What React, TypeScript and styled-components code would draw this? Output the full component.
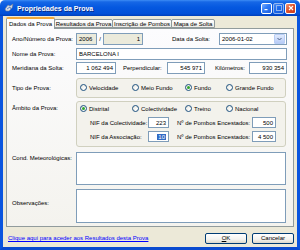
import React from "react";
import styled, { createGlobalStyle } from "styled-components";

const GlobalStyle = createGlobalStyle`
  html, body {
    margin: 0;
    padding: 0;
    width: 300px;
    height: 250px;
    overflow: hidden;
  }
  body {
    font-family: "Liberation Sans", Arial, sans-serif;
    font-size: 6px;
    color: #000;
  }
`;

const Window = styled.div`
  width: 300px;
  height: 250px;
  display: flex;
  flex-direction: column;
`;

const TitleBar = styled.div`
  height: 16px;
  flex: none;
  display: flex;
  align-items: center;
  padding: 0 4px 0 4px;
  border-radius: 5px 5px 0 0;
  background: linear-gradient(
    to bottom,
    #3d8cf5 0%,
    #1667e6 12%,
    #0558e0 45%,
    #0250d8 85%,
    #003fb8 100%
  );
`;

const TitleIcon = styled.svg`
  width: 10px;
  height: 10px;
  flex: none;
`;

const TitleText = styled.div`
  margin-left: 3px;
  flex: 1;
  color: #fff;
  font-weight: bold;
  font-size: 7px;
  text-shadow: 1px 1px 0 #0a2a86;
`;

const CaptionButton = styled.div<{ $kind: "min" | "max" | "close" }>`
  width: 11px;
  height: 11px;
  margin-left: 1px;
  box-sizing: border-box;
  border: 1px solid #fff;
  border-radius: 2px;
  display: flex;
  align-items: center;
  justify-content: center;
  opacity: ${({ $kind }) => ($kind === "max" ? 0.55 : 1)};
  background: ${({ $kind }) =>
    $kind === "close"
      ? "linear-gradient(135deg, #f09a7c 0%, #e0552e 45%, #c8391a 100%)"
      : "linear-gradient(135deg, #7fb0ff 0%, #2f7af5 45%, #1f5ee0 100%)"};
`;

const Frame = styled.div`
  flex: 1;
  display: flex;
  flex-direction: column;
  background: #ece9d8;
  border-left: 3px solid #0a55df;
  border-right: 3px solid #0a55df;
  border-bottom: 3px solid #0a4bd0;
  padding: 1px 3px 0 3px;
`;

const TabStrip = styled.div`
  height: 11px;
  display: flex;
  align-items: flex-end;
  flex: none;
  position: relative;
  z-index: 1;
`;

const Tab = styled.div<{ $active?: boolean; $w: number }>`
  width: ${({ $w }) => $w}px;
  box-sizing: border-box;
  height: ${({ $active }) => ($active ? 12 : 9)}px;
  margin-bottom: ${({ $active }) => ($active ? -1 : 0)}px;
  display: flex;
  align-items: center;
  justify-content: center;
  white-space: nowrap;
  border: 1px solid #919b9c;
  border-bottom: ${({ $active }) => ($active ? "none" : "1px solid #919b9c")};
  border-top: ${({ $active }) => ($active ? "2px solid #f3a93a" : "1px solid #919b9c")};
  border-radius: 2px 2px 0 0;
  background: ${({ $active }) =>
    $active ? "#fcfcfe" : "linear-gradient(to bottom, #ffffff, #ecebe6)"};
  margin-left: ${({ $active }) => ($active ? 0 : -1)}px;
`;

const Panel = styled.div`
  height: 199px;
  box-sizing: border-box;
  flex: none;
  border: 1px solid #919b9c;
  background: linear-gradient(to bottom, #fcfcfe 0%, #f4f3ee 100%);
  padding: 4px 6px 0 5px;
  display: flex;
  flex-direction: column;
`;

const Row = styled.div<{ $mt?: number; $h?: number; $top?: boolean }>`
  display: flex;
  align-items: ${({ $top }) => ($top ? "flex-start" : "center")};
  margin-top: ${({ $mt }) => $mt ?? 0}px;
  height: ${({ $h }) => $h ?? 12}px;
  flex: none;
`;

const Label = styled.div<{ $pt?: number }>`
  width: 64px;
  flex: none;
  white-space: nowrap;
  padding-top: ${({ $pt }) => $pt ?? 0}px;
`;

const InlineLabel = styled.div<{ $w?: number; $pl?: number; $right?: boolean }>`
  width: ${({ $w }) => ($w ? `${$w}px` : "auto")};
  flex: ${({ $w }) => ($w ? "none" : 1)};
  padding-left: ${({ $pl }) => $pl ?? 0}px;
  padding-right: ${({ $right }) => ($right ? 9 : 0)}px;
  text-align: ${({ $right }) => ($right ? "right" : "left")};
  box-sizing: border-box;
  white-space: nowrap;
`;

const Field = styled.div<{ $w?: number; $h?: number; $right?: boolean; $disabled?: boolean }>`
  width: ${({ $w }) => ($w ? `${$w}px` : "100%")};
  height: ${({ $h }) => $h ?? 12}px;
  flex: none;
  box-sizing: border-box;
  border: 1px solid #7f9db9;
  background: ${({ $disabled }) => ($disabled ? "#ebeadb" : "#fff")};
  display: flex;
  align-items: center;
  justify-content: ${({ $right }) => ($right ? "flex-end" : "flex-start")};
  padding: 0 2px;
  white-space: nowrap;
`;

const Selected = styled.span`
  background: #316ac5;
  color: #fff;
  padding: 0 1px;
`;

const Slash = styled.div`
  width: 6px;
  text-align: center;
  flex: none;
`;

const Combo = styled(Field)`
  justify-content: space-between;
  padding-right: 1px;
`;

const ComboButton = styled.div`
  width: 9px;
  height: 8px;
  border-radius: 1px;
  border: 1px solid #b9cdf5;
  background: linear-gradient(to bottom, #e2ebfd, #b7cbf6);
  display: flex;
  align-items: center;
  justify-content: center;
`;

const Group = styled.div<{ $h: number }>`
  width: 210px;
  height: ${({ $h }) => $h}px;
  box-sizing: border-box;
  border: 1px solid #d0d0bf;
  border-radius: 3px;
  background: #f3f2ec;
  display: flex;
  flex-direction: column;
  flex: none;
`;

const RadioRow = styled.div<{ $mt: number }>`
  display: grid;
  grid-template-columns: 52px 53px 41px auto;
  padding-left: 3px;
  margin-top: ${({ $mt }) => $mt}px;
  height: 9px;
  align-items: center;
`;

const RadioItem = styled.div`
  display: flex;
  align-items: center;
  white-space: nowrap;
`;

const RadioCircle = styled.div<{ $on?: boolean }>`
  width: 7px;
  height: 7px;
  box-sizing: border-box;
  border-radius: 50%;
  border: 1px solid #1c5180;
  background: radial-gradient(circle at 70% 70%, #ffffff 0%, #e6e5dc 100%);
  margin-right: 2px;
  display: flex;
  align-items: center;
  justify-content: center;
  &::after {
    content: "";
    display: ${({ $on }) => ($on ? "block" : "none")};
    width: 3px;
    height: 3px;
    border-radius: 50%;
    background: #2fa52f;
  }
`;

const NifRow = styled.div<{ $mt: number }>`
  display: flex;
  align-items: center;
  height: 11px;
  margin-top: ${({ $mt }) => $mt}px;
  padding-left: 13px;
`;

const TextArea = styled.div<{ $h: number }>`
  width: 210px;
  height: ${({ $h }) => $h}px;
  box-sizing: border-box;
  border: 1px solid #7f9db9;
  background: #fff;
  flex: none;
`;

const Footer = styled.div`
  height: 20px;
  display: flex;
  align-items: center;
  padding: 2px 0 0 2px;
  box-sizing: border-box;
`;

const Link = styled.a`
  flex: 1;
  color: #0000ff;
  text-decoration: underline;
  white-space: nowrap;
`;

const Button = styled.div`
  width: 42px;
  height: 11px;
  box-sizing: border-box;
  margin-left: 5px;
  border: 1px solid #003c74;
  border-radius: 2px;
  background: linear-gradient(to bottom, #ffffff 0%, #f3f2ee 60%, #dcd8cc 100%);
  display: flex;
  align-items: center;
  justify-content: center;
  u {
    text-decoration: underline;
  }
`;

const Radio = ({ label, on }: { label: string; on?: boolean }) => (
  <RadioItem>
    <RadioCircle $on={on} />
    {label}
  </RadioItem>
);

const App = () => {
  return (
    <>
      <GlobalStyle />
      <Window>
        <TitleBar>
          <TitleIcon viewBox="0 0 10 10">
            <path d="M1 6 L4 2 L6 3 L9 1 L8 5 L5 8 L2 8 Z" fill="#d8dde6" stroke="#6c7a90" strokeWidth="0.6" />
            <path d="M3 6 L6 4 L7 6" fill="none" stroke="#2b5fb8" strokeWidth="0.7" />
          </TitleIcon>
          <TitleText>Propriedades da Prova</TitleText>
          <CaptionButton $kind="min">
            <svg width="5" height="5" viewBox="0 0 5 5">
              <rect x="0.5" y="3" width="3" height="1.2" fill="#fff" />
            </svg>
          </CaptionButton>
          <CaptionButton $kind="max">
            <svg width="6" height="6" viewBox="0 0 6 6">
              <rect x="0.5" y="0.5" width="5" height="5" fill="none" stroke="#fff" strokeWidth="1" />
            </svg>
          </CaptionButton>
          <CaptionButton $kind="close">
            <svg width="6" height="6" viewBox="0 0 6 6">
              <path d="M1 1 L5 5 M5 1 L1 5" stroke="#fff" strokeWidth="1.2" />
            </svg>
          </CaptionButton>
        </TitleBar>
        <Frame>
          <TabStrip>
            <Tab $active $w={49}>Dados da Prova</Tab>
            <Tab $w={59}>Resultados da Prova</Tab>
            <Tab $w={60}>Inscrição de Pombos</Tab>
            <Tab $w={44}>Mapa de Solta</Tab>
          </TabStrip>
          <Panel>
            <Row>
              <Label>Ano/Número da Prova:</Label>
              <Field $w={21} $disabled>2006</Field>
              <Slash>/</Slash>
              <Field $w={40} $right $disabled>1</Field>
              <InlineLabel $right>Data da Solta:</InlineLabel>
              <Combo $w={68}>
                2006-01-02
                <ComboButton>
                  <svg width="5" height="4" viewBox="0 0 5 4">
                    <path d="M0.5 1 L2.5 3 L4.5 1" fill="none" stroke="#4d6185" strokeWidth="1" />
                  </svg>
                </ComboButton>
              </Combo>
            </Row>
            <Row $mt={3}>
              <Label>Nome da Prova:</Label>
              <Field $w={211}>BARCELONA I</Field>
            </Row>
            <Row $mt={2}>
              <Label>Meridiana da Solta:</Label>
              <Field $w={40} $right>1 062 494</Field>
              <InlineLabel $w={51} $pl={7}>Perpendicular:</InlineLabel>
              <Field $w={38} $right>545 971</Field>
              <InlineLabel $w={44} $pl={10}>Kilómetros:</InlineLabel>
              <Field $w={38} $right>930 354</Field>
            </Row>
            <Row $mt={4} $h={20}>
              <Label>Tipo de Prova:</Label>
              <Group $h={20}>
                <RadioRow $mt={4}>
                  <Radio label="Velocidade" />
                  <Radio label="Meio Fundo" />
                  <Radio label="Fundo" on />
                  <Radio label="Grande Fundo" />
                </RadioRow>
              </Group>
            </Row>
            <Row $mt={3} $h={46} $top>
              <Label $pt={4}>Âmbito da Prova:</Label>
              <Group $h={46}>
                <RadioRow $mt={2}>
                  <Radio label="Distrital" on />
                  <Radio label="Colectividade" />
                  <Radio label="Treino" />
                  <Radio label="Nacional" />
                </RadioRow>
                <NifRow $mt={4}>
                  <InlineLabel $w={58}>NIF da Colectividade:</InlineLabel>
                  <Field $w={21} $h={11} $right>223</Field>
                  <InlineLabel $w={83} $pl={8}>Nº de Pombos Encestados:</InlineLabel>
                  <Field $w={24} $h={11} $right>500</Field>
                </NifRow>
                <NifRow $mt={3}>
                  <InlineLabel $w={58}>NIF da Associação:</InlineLabel>
                  <Field $w={21} $h={11} $right>
                    <Selected>10</Selected>
                  </Field>
                  <InlineLabel $w={83} $pl={8}>Nº de Pombos Encestados:</InlineLabel>
                  <Field $w={24} $h={11} $right>4 500</Field>
                </NifRow>
              </Group>
            </Row>
            <Row $mt={5} $h={33} $top>
              <Label $pt={3}>Cond. Meteorológicas:</Label>
              <TextArea $h={33} />
            </Row>
            <Row $mt={4} $h={34} $top>
              <Label $pt={11}>Observações:</Label>
              <TextArea $h={34} />
            </Row>
          </Panel>
          <Footer>
            <Link>Clique aqui para aceder aos Resultados desta Prova</Link>
            <Button>
              <u>O</u>K
            </Button>
            <Button>Cancelar</Button>
          </Footer>
        </Frame>
      </Window>
    </>
  );
};

export default App;
